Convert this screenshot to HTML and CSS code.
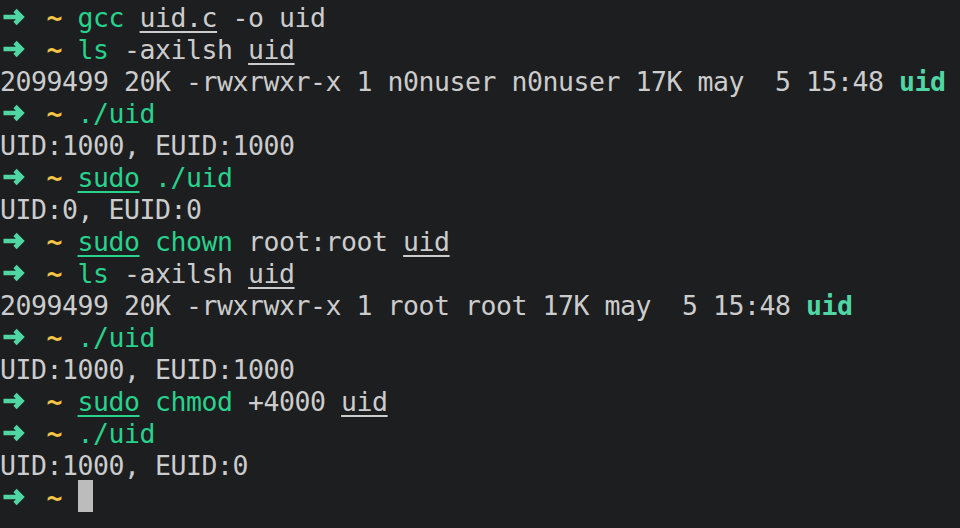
FILE: index.html
```html
<!DOCTYPE html>
<html>
<head>
<meta charset="utf-8">
<link rel="stylesheet" href="styles.css">
</head>
<body>
<div class="term">
<div class="line"><span class="arrow"><svg viewBox="0 0 16 32" width="16" height="32"><path d="M3.5 17 H21 M15 10.5 L21.5 17 L15 23.5" /></svg></span>  <span class="tilde">~</span> <span class="cmd">gcc</span> <span class="u">uid.c</span> -o uid</div>
<div class="line"><span class="arrow"><svg viewBox="0 0 16 32" width="16" height="32"><path d="M3.5 17 H21 M15 10.5 L21.5 17 L15 23.5" /></svg></span>  <span class="tilde">~</span> <span class="cmd">ls</span> -axilsh <span class="u">uid</span></div>
<div class="line">2099499 20K -rwxrwxr-x 1 n0nuser n0nuser 17K may  5 15:48 <span class="exe">uid</span></div>
<div class="line"><span class="arrow"><svg viewBox="0 0 16 32" width="16" height="32"><path d="M3.5 17 H21 M15 10.5 L21.5 17 L15 23.5" /></svg></span>  <span class="tilde">~</span> <span class="cmd">./uid</span></div>
<div class="line">UID:1000, EUID:1000</div>
<div class="line"><span class="arrow"><svg viewBox="0 0 16 32" width="16" height="32"><path d="M3.5 17 H21 M15 10.5 L21.5 17 L15 23.5" /></svg></span>  <span class="tilde">~</span> <span class="cmd u">sudo</span> <span class="cmd">./uid</span></div>
<div class="line">UID:0, EUID:0</div>
<div class="line"><span class="arrow"><svg viewBox="0 0 16 32" width="16" height="32"><path d="M3.5 17 H21 M15 10.5 L21.5 17 L15 23.5" /></svg></span>  <span class="tilde">~</span> <span class="cmd u">sudo</span> <span class="cmd">chown</span> root:root <span class="u">uid</span></div>
<div class="line"><span class="arrow"><svg viewBox="0 0 16 32" width="16" height="32"><path d="M3.5 17 H21 M15 10.5 L21.5 17 L15 23.5" /></svg></span>  <span class="tilde">~</span> <span class="cmd">ls</span> -axilsh <span class="u">uid</span></div>
<div class="line">2099499 20K -rwxrwxr-x 1 root root 17K may  5 15:48 <span class="exe">uid</span></div>
<div class="line"><span class="arrow"><svg viewBox="0 0 16 32" width="16" height="32"><path d="M3.5 17 H21 M15 10.5 L21.5 17 L15 23.5" /></svg></span>  <span class="tilde">~</span> <span class="cmd">./uid</span></div>
<div class="line">UID:1000, EUID:1000</div>
<div class="line"><span class="arrow"><svg viewBox="0 0 16 32" width="16" height="32"><path d="M3.5 17 H21 M15 10.5 L21.5 17 L15 23.5" /></svg></span>  <span class="tilde">~</span> <span class="cmd u">sudo</span> <span class="cmd">chmod</span> +4000 <span class="u">uid</span></div>
<div class="line"><span class="arrow"><svg viewBox="0 0 16 32" width="16" height="32"><path d="M3.5 17 H21 M15 10.5 L21.5 17 L15 23.5" /></svg></span>  <span class="tilde">~</span> <span class="cmd">./uid</span></div>
<div class="line">UID:1000, EUID:0</div>
<div class="line"><span class="arrow"><svg viewBox="0 0 16 32" width="16" height="32"><path d="M3.5 17 H21 M15 10.5 L21.5 17 L15 23.5" /></svg></span>  <span class="tilde">~</span> <span class="cursor"></span></div>
</div>
</body>
</html>
```
FILE: styles.css
```css
html, body {
  margin: 0;
  padding: 0;
  background: #1d1e20;
  width: 960px;
  height: 528px;
  overflow: hidden;
}
.term {
  display: flex;
  flex-direction: column;
  font-family: "DejaVu Sans Mono", monospace;
  font-size: 26.5px;
  letter-spacing: -0.454px;
  color: #cccccc;
  white-space: pre;
}
.line {
  height: 32px;
  line-height: 36px;
}
.arrow {
  display: inline-block;
  width: 15.5px;
  height: 32px;
  vertical-align: top;
  overflow: visible;
}
.arrow svg {
  display: block;
  overflow: visible;
}
.arrow path {
  fill: none;
  stroke: #4fd6a3;
  stroke-width: 4.6;
  stroke-linejoin: miter;
  stroke-linecap: butt;
}
.tilde {
  color: #f6c445;
  font-weight: bold;
}
.cmd {
  color: #27d28c;
}
.u {
  text-decoration: underline;
  text-decoration-thickness: 2px;
  text-underline-offset: 4px;
}
.exe {
  color: #4fd6a3;
  font-weight: bold;
}
.cursor {
  display: inline-block;
  width: 15.5px;
  height: 32px;
  vertical-align: top;
  background: #bcbcbc;
}
```
